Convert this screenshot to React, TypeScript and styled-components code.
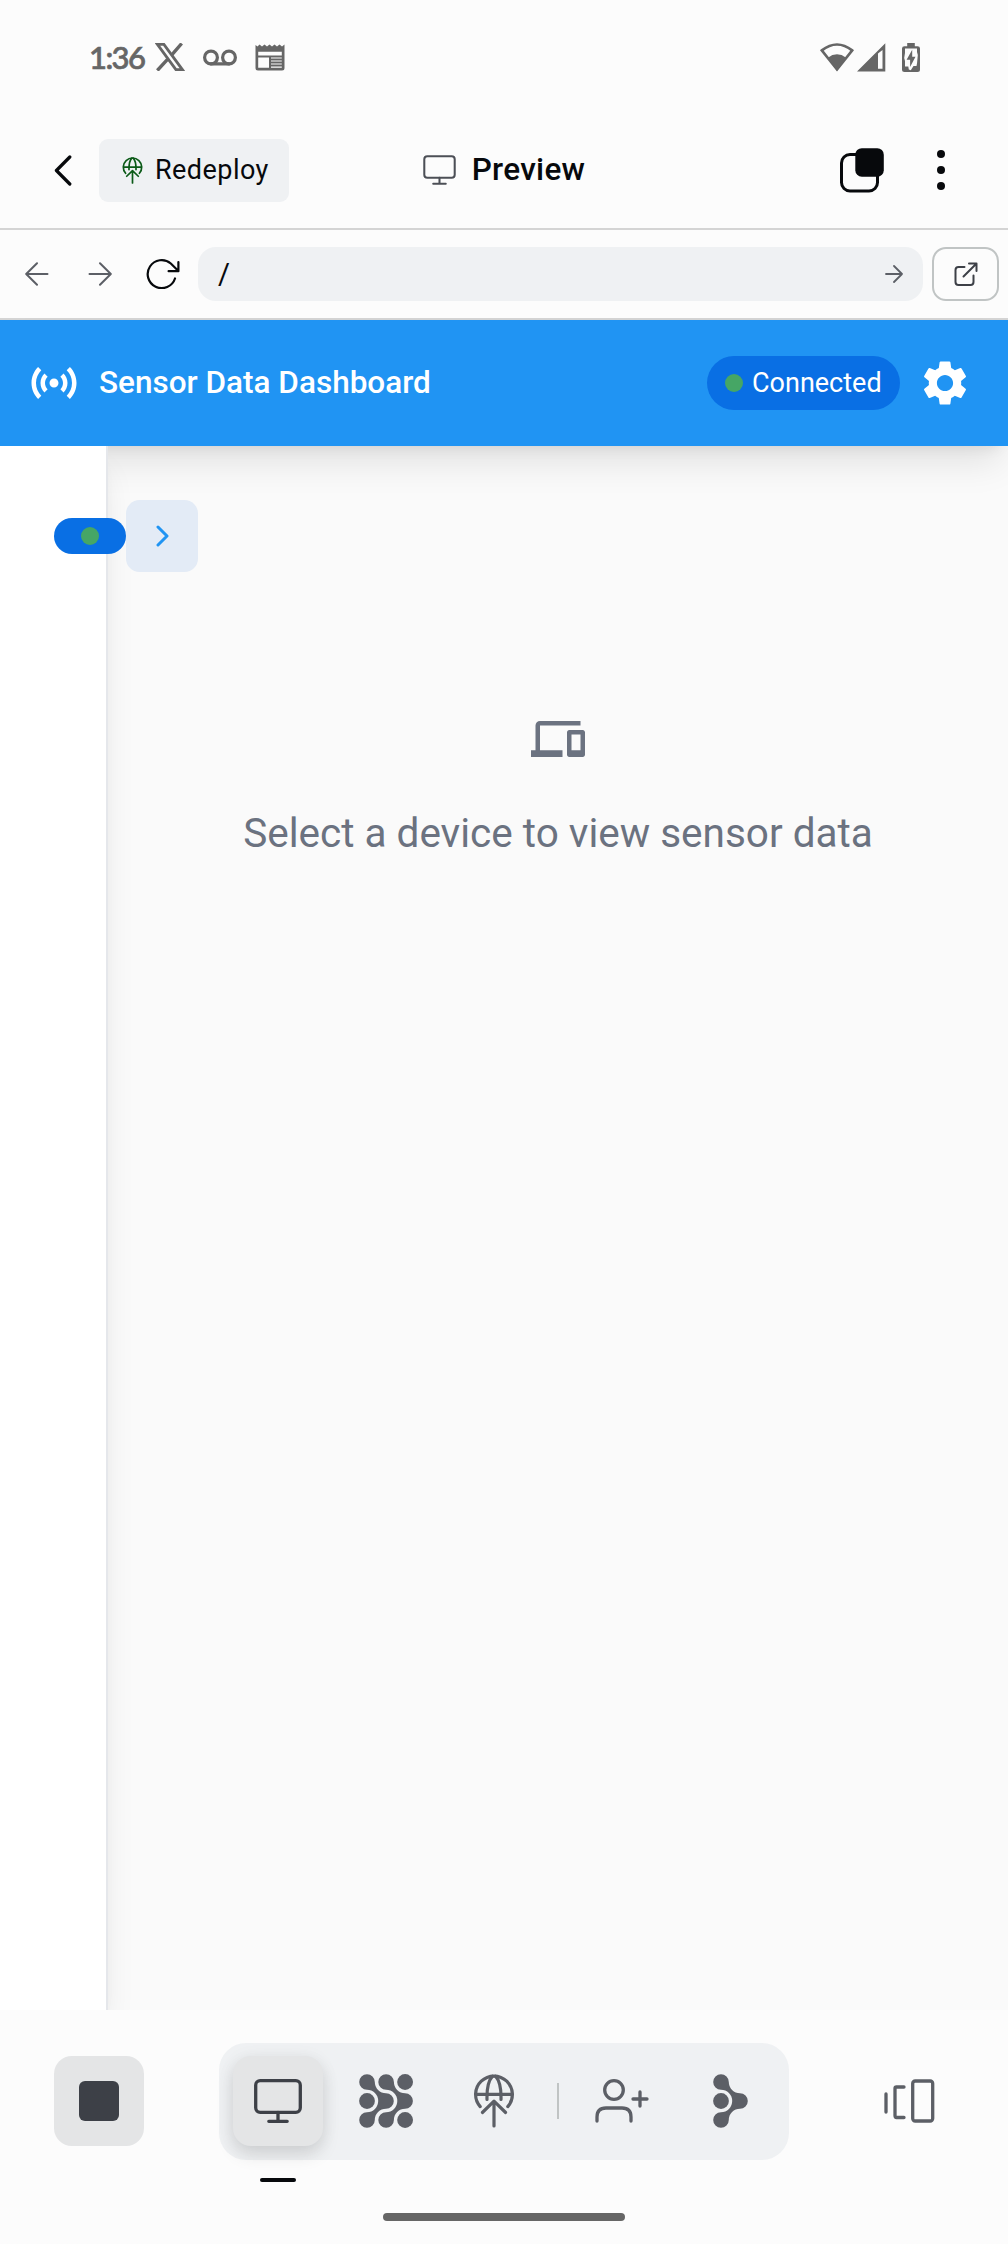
import React from "react";
import styled, { createGlobalStyle } from "styled-components";
import { MdDevices, MdSensors, MdSettings } from "react-icons/md";

const GlobalStyle = createGlobalStyle`
  * { box-sizing: border-box; }
  body { margin: 0; background: #fcfcfc; }
  button { font: inherit; border: 0; padding: 0; background: none; color: inherit; }
  svg { display: block; flex: none; }
`;

const Screen = styled.div`
  width: 1008px;
  height: 2244px;
  display: flex;
  flex-direction: column;
  background: #fcfcfc;
  font-family: Roboto, "Noto Sans", sans-serif;
  overflow: hidden;
`;

const StatusBar = styled.div`
  height: 112px;
  padding: 2px 88px 0 89px;
  display: flex;
  align-items: center;
  justify-content: space-between;
  color: #666;
`;

const StatusGroup = styled.div<{ $gap: number }>`
  display: flex;
  align-items: center;
  gap: ${(p) => p.$gap}px;
`;

const BatterySlot = styled.div`
  margin-left: 13px;
`;

const Clock = styled.span`
  width: 56px;
  font: 500 31px/36px Lato, sans-serif;
  letter-spacing: -1.6px;
  -webkit-text-stroke: 0.7px #666;
  margin-right: -8px;
  white-space: nowrap;
`;

const TopBar = styled.header`
  height: 118px;
  border-bottom: 2px solid #d4d4d4;
  padding: 0 54px;
  display: grid;
  grid-template-columns: 1fr auto 1fr;
  align-items: center;
  color: #07090c;
`;

const TopLeft = styled.div`
  display: flex;
  align-items: center;
  gap: 27px;
`;

const RedeployButton = styled.button`
  width: 190px;
  height: 63px;
  padding-left: 20px;
  border-radius: 9px;
  background: #eff1f3;
  display: flex;
  align-items: center;
  gap: 9px;
  font-size: 27px;
  letter-spacing: 0.45px;
`;

const IconTint = styled.span<{ $color: string }>`
  color: ${(p) => p.$color};
`;

const PageTitle = styled.div`
  display: flex;
  align-items: center;
  gap: 16px;
  font-size: 31.5px;
  font-weight: 500;
  letter-spacing: 0.3px;
  line-height: 40px;
`;

const TopRight = styled.div`
  display: flex;
  justify-content: flex-end;
  align-items: center;
  gap: 53px;
  padding-right: 9px;
`;

const AddressBar = styled.nav`
  height: 90px;
  border-bottom: 2px solid #d4d4d4;
  padding: 0 9px 0 5px;
  display: flex;
  align-items: center;
`;

const NavButton = styled.button<{ $color: string }>`
  width: 63px;
  height: 54px;
  display: grid;
  place-items: center;
  color: ${(p) => p.$color};
`;

const PathField = styled.div`
  flex: 1;
  height: 54px;
  margin: 0 9px 0 4px;
  padding: 0 20px;
  border-radius: 18px;
  background: #eff1f3;
  display: flex;
  align-items: center;
  justify-content: space-between;
  color: #5c5f66;
`;

const PathText = styled.span`
  font-size: 29px;
  color: #07090c;
`;

const OpenButton = styled.button`
  width: 67px;
  height: 54px;
  border: 2px solid #c0c4c4;
  border-radius: 14px;
  display: grid;
  place-items: center;
  color: #3d4047;
`;

const AppHeader = styled.header`
  position: relative;
  height: 126px;
  padding: 0 36px 0 27px;
  display: flex;
  align-items: center;
  background: #2094f3;
  color: #fff;
  box-shadow: 0 22.5px 33.75px -6.75px rgba(0, 0, 0, 0.1),
    0 9px 13.5px -9px rgba(0, 0, 0, 0.1);
`;

const AppTitle = styled.h1`
  flex: 1;
  margin: 0 0 0 18px;
  font-size: 31.5px;
  font-weight: 500;
  line-height: 42px;
`;

const ConnectionPill = styled.div`
  width: 193px;
  height: 54px;
  padding-left: 18px;
  margin-right: 18px;
  border-radius: 27px;
  background: #096fe4;
  display: flex;
  align-items: center;
  gap: 9px;
  font-size: 27px;
`;

const Dot = styled.span`
  width: 18px;
  height: 18px;
  border-radius: 50%;
  background: #46a665;
`;

const Workspace = styled.div`
  height: 1564px;
  display: flex;
  background: #fafafa;
`;

const Sidebar = styled.aside`
  position: relative;
  z-index: 1;
  width: 108px;
  background: #fff;
  border-right: 2px solid #e5e7eb;
  clip-path: inset(0 -95px 0 0);
  box-shadow: 0 22.5px 33.75px -6.75px rgba(0, 0, 0, 0.1),
    0 9px 13.5px -9px rgba(0, 0, 0, 0.1);
`;

const DrawerHandle = styled.div`
  position: absolute;
  left: 54px;
  top: 54px;
  display: flex;
  align-items: center;
`;

const HandlePill = styled.div`
  width: 72px;
  height: 36px;
  border-radius: 18px;
  background: #096fe4;
  display: grid;
  place-items: center;
`;

const ExpandButton = styled.button`
  width: 72px;
  height: 72px;
  border-radius: 13.5px;
  background: #e3ebf6;
  color: #2094f3;
  display: grid;
  place-items: center;
`;

const EmptyState = styled.main`
  flex: 1;
  padding-top: 266px;
  display: flex;
  flex-direction: column;
  align-items: center;
  gap: 36px;
  color: #6b7280;
  font-size: 40.5px;
  line-height: 63px;
  white-space: nowrap;
`;

const BottomBar = styled.footer`
  height: 167px;
  padding: 33px 73px 0 54px;
  display: flex;
  align-items: flex-start;
`;

const StopButton = styled.button`
  width: 90px;
  height: 90px;
  margin-top: 13px;
  border-radius: 18px;
  background: #e4e5e6;
  display: grid;
  place-items: center;
`;

const StopMark = styled.span`
  width: 40px;
  height: 40px;
  border-radius: 6px;
  background: #3d4047;
`;

const Dock = styled.div`
  width: 570px;
  height: 117px;
  margin: 0 auto 0 75px;
  padding: 0 14px 1px;
  border-radius: 27px;
  background: #eff1f3;
  display: flex;
  align-items: center;
  gap: 18px;
  color: #5c5f66;
`;

const DockButton = styled.button<{ $active?: boolean }>`
  position: relative;
  width: 90px;
  height: 90px;
  border-radius: 18px;
  display: grid;
  place-items: center;
  color: ${(p) => (p.$active ? "#3d4047" : "#5c5f66")};
  background: ${(p) => (p.$active ? "#e4e5e6" : "transparent")};
  box-shadow: ${(p) =>
    p.$active ? "0 9px 18px rgba(0,0,0,0.11), 0 2px 18px rgba(0,0,0,0.06)" : "none"};
`;

const ActiveMark = styled.span`
  position: absolute;
  left: 27px;
  top: 122px;
  width: 36px;
  height: 4px;
  border-radius: 2px;
  background: #07090c;
`;

const DockDivider = styled.span`
  width: 2px;
  height: 36px;
  background: #c0c4c4;
`;

const TabsButton = styled.button`
  height: 90px;
  margin-top: 13px;
  display: grid;
  place-items: center;
  color: #5c5f66;
`;

const HomeRow = styled.div`
  flex: 1;
  padding-top: 36px;
  display: flex;
  justify-content: center;
`;

const HomeIndicator = styled.span`
  width: 242px;
  height: 8px;
  border-radius: 4px;
  background: #666;
`;

type LineProps = {
  w: number;
  h: number;
  stroke?: number;
  box?: string;
  children: React.ReactNode;
};

const Line = ({ w, h, stroke = 3, box, children }: LineProps) => (
  <svg
    width={w}
    height={h}
    viewBox={box ?? `0 0 ${w} ${h}`}
    fill="none"
    stroke="currentColor"
    strokeWidth={stroke}
    strokeLinecap="round"
    strokeLinejoin="round"
  >
    {children}
  </svg>
);

const XLogo = () => (
  <svg width="30" height="28" viewBox="0 0 30 28" fill="none" stroke="currentColor">
    <path d="M2.4 1.4H8.9L27.4 26.6H20.9Z" strokeWidth="2.8" />
    <path d="M26.7 0.5L16.8 11.8M12.5 16.3L2.3 27.5" strokeWidth="3.4" />
  </svg>
);

const Voicemail = () => (
  <Line w={34} h={17} stroke={3.2}>
    <circle cx="8" cy="8.5" r="6.4" />
    <circle cx="26" cy="8.5" r="6.4" />
    <path d="M8 14.9H26" />
  </Line>
);

const NewsIcon = () => (
  <svg width="30" height="27" viewBox="0 0 30 27" fill="currentColor">
    <path
      fillRule="evenodd"
      d="M0.5 1L2.5 2.5L4.5 0.5L7 2.5L9.5 0.5L12 2.5L14.5 0.5L17 2.5L19.5 0.5L22 2.5L24.5 0.5L27 2.5L29.5 0.5V24Q29.5 26.5 27 26.5H3Q0.5 26.5 0.5 24ZM3.2 7.8V11.5H26.8V7.8ZM3.2 13.5V23.8H14V13.5ZM16 13.5V14.5H26.8V13.5ZM16 16.5V17.5H26.8V16.5ZM16 19.5V20.5H26.8V19.5ZM16 22.5V23.8H26.8V22.5Z"
    />
  </svg>
);

const WifiIcon = () => (
  <svg width="34" height="29" viewBox="0 0 34 29">
    <path
      d="M1.8 7.4Q17-4.4 32.2 7.4L17 26.5Z"
      fill="none"
      stroke="currentColor"
      strokeWidth="2.6"
    />
    <path d="M7.8 14.7Q17 7.8 26.2 14.7L17 28Z" fill="currentColor" />
  </svg>
);

const SignalIcon = () => (
  <svg width="29" height="29" viewBox="0 0 29 29" fill="currentColor">
    <path fillRule="evenodd" d="M0 28.6L28.3 0.3V28.6ZM21 10.5V25.8H25.5V7Z" />
  </svg>
);

const BatteryIcon = () => (
  <svg width="18" height="29" viewBox="0 0 18 29">
    <path
      fill="currentColor"
      d="M5.2 0H12.8V3.2H15.5Q18 3.2 18 5.5V26.5Q18 29 15.5 29H2.5Q0 29 0 26.5V5.5Q0 3.2 2.5 3.2H5.2Z"
    />
    <path
      fill="#fcfcfc"
      d="M3 5.5H15V9L15.8 12L15 20.5L14.5 23H11.5L8.8 27.3L6.8 26.5L6.3 23.5H3V18L2.2 15L3 10Z"
    />
    <path fill="currentColor" d="M10.2 6.8L4.6 16.8H8.1V24L13.5 13.8H10.2Z" />
  </svg>
);

const MonitorIcon = ({ w, h, stroke }: { w: number; h: number; stroke: number }) => (
  <Line w={w} h={h} box="0 0 48 44" stroke={stroke}>
    <rect x="1.7" y="1.7" width="44.6" height="31.6" rx="4.5" />
    <path d="M24 33.5V42M14.8 42.3H33.2" />
  </Line>
);

const DeployIcon = ({ size, stroke }: { size: number; stroke: number }) => (
  <Line w={size} h={size} box="0 0 54 54" stroke={stroke}>
    <path d="M13.2 32.6A18.4 18.4 0 1 1 40.8 32.6M8.6 20.3H45.4" />
    <path d="M25.5 2.2C21.5 6.5 19.7 13 20 25.5M28.5 2.2C32.5 6.5 34.3 13 34 25.5" />
    <path d="M27 52V27.2M15.4 38.5L27 27.2L38.6 38.5" />
  </Line>
);

const BRANCH =
  "M15.8 8A11.2 11.2 0 0 0 27 19.2A7.8 7.8 0 0 1 27 34.8A11.2 11.2 0 0 0 15.8 46A7.8 7.8 0 1 1 8 38.2A11.2 11.2 0 0 0 8 15.8A7.8 7.8 0 1 1 15.8 8Z";

const MeshIcon = () => (
  <svg width="54" height="54" viewBox="0 0 54 54" fill="currentColor">
    <path d={BRANCH} />
    <path d={BRANCH} transform="translate(19.1 0)" />
    <circle cx="8" cy="27" r="7.9" />
    <circle cx="46.1" cy="8" r="7.9" />
    <circle cx="46.1" cy="46" r="7.9" />
  </svg>
);

const BranchIcon = () => (
  <svg width="35" height="54" viewBox="0 0 35 54" fill="currentColor">
    <path d={BRANCH} />
    <circle cx="8" cy="27" r="7.9" />
  </svg>
);

export default function App() {
  return (
    <Screen>
      <GlobalStyle />
      <StatusBar>
        <StatusGroup $gap={18}>
          <Clock>1:36</Clock>
          <XLogo />
          <Voicemail />
          <NewsIcon />
        </StatusGroup>
        <StatusGroup $gap={3}>
          <WifiIcon />
          <SignalIcon />
          <BatterySlot>
            <BatteryIcon />
          </BatterySlot>
        </StatusGroup>
      </StatusBar>

      <TopBar>
        <TopLeft>
          <Line w={18} h={31} stroke={3.2}>
            <path d="M15.8 2L2.4 15.5L15.8 29" />
          </Line>
          <RedeployButton>
            <IconTint $color="#0b5a17">
              <DeployIcon size={27} stroke={3.4} />
            </IconTint>
            Redeploy
          </RedeployButton>
        </TopLeft>
        <PageTitle>
          <IconTint $color="#4c4f56">
            <MonitorIcon w={33} h={30} stroke={3} />
          </IconTint>
          Preview
        </PageTitle>
        <TopRight>
          <svg width="44" height="45" viewBox="0 0 44 45">
            <rect
              x="1.5"
              y="6.5"
              width="36"
              height="36.5"
              rx="8.5"
              fill="none"
              stroke="#07090c"
              strokeWidth="3"
            />
            <rect x="15.3" y="0.2" width="28.5" height="28.5" rx="6.5" fill="#07090c" />
          </svg>
          <svg width="8" height="40" viewBox="0 0 8 40" fill="#07090c">
            <circle cx="4" cy="4" r="4" />
            <circle cx="4" cy="20" r="4" />
            <circle cx="4" cy="36" r="4" />
          </svg>
        </TopRight>
      </TopBar>

      <AddressBar>
        <NavButton $color="#5c5f66">
          <Line w={24} h={24} stroke={2}>
            <path d="M22.5 12H1.5M12 1.2L1.2 12L12 22.8" />
          </Line>
        </NavButton>
        <NavButton $color="#5c5f66">
          <Line w={24} h={24} stroke={2}>
            <path d="M1.5 12H22.5M12 1.2L22.8 12L12 22.8" />
          </Line>
        </NavButton>
        <NavButton $color="#07090c">
          <Line w={34} h={30} stroke={2.2}>
            <path d="M29 19.5A14 14 0 1 1 24.8 4.5L32.4 12M32.4 3V12.2H22.6" />
          </Line>
        </NavButton>
        <PathField>
          <PathText>/</PathText>
          <Line w={18} h={18} stroke={1.8}>
            <path d="M1 9H17M9 1L17 9L9 17" />
          </Line>
        </PathField>
        <OpenButton>
          <Line w={24} h={24} stroke={2}>
            <path d="M10.5 5H4.5Q1.5 5 1.5 8V20Q1.5 23 4.5 23H16.5Q19.5 23 19.5 20V13.5M9.5 14.5L22.5 1.5M15 1.5H22.5V9" />
          </Line>
        </OpenButton>
      </AddressBar>

      <AppHeader>
        <MdSensors size={54} />
        <AppTitle>Sensor Data Dashboard</AppTitle>
        <ConnectionPill>
          <Dot />
          Connected
        </ConnectionPill>
        <MdSettings size={54} />
      </AppHeader>

      <Workspace>
        <Sidebar>
          <DrawerHandle>
            <HandlePill>
              <Dot />
            </HandlePill>
            <ExpandButton>
              <Line w={13} h={22}>
                <path d="M2 2L11 11L2 20" />
              </Line>
            </ExpandButton>
          </DrawerHandle>
        </Sidebar>
        <EmptyState>
          <MdDevices size={54} />
          Select a device to view sensor data
        </EmptyState>
      </Workspace>

      <BottomBar>
        <StopButton>
          <StopMark />
        </StopButton>
        <Dock>
          <DockButton $active>
            <MonitorIcon w={48} h={44} stroke={3.3} />
            <ActiveMark />
          </DockButton>
          <DockButton>
            <MeshIcon />
          </DockButton>
          <DockButton>
            <DeployIcon size={54} stroke={3.2} />
          </DockButton>
          <DockDivider />
          <DockButton>
            <Line w={54} h={44} stroke={3.3}>
              <circle cx="19" cy="11" r="9.3" />
              <path d="M2 42V38Q2 29 11 29H27Q36 29 36 38V42M45 13V27M38 20H52" />
            </Line>
          </DockButton>
          <DockButton>
            <BranchIcon />
          </DockButton>
        </Dock>
        <TabsButton>
          <Line w={51} h={44} stroke={3.3}>
            <path d="M2 15V33M20 8H12.5Q11 8 11 9.5V36.5Q11 38.5 12.5 38.5H20" />
            <rect x="28.7" y="2" width="20" height="40" rx="2.5" />
          </Line>
        </TabsButton>
      </BottomBar>
      <HomeRow>
        <HomeIndicator />
      </HomeRow>
    </Screen>
  );
}
